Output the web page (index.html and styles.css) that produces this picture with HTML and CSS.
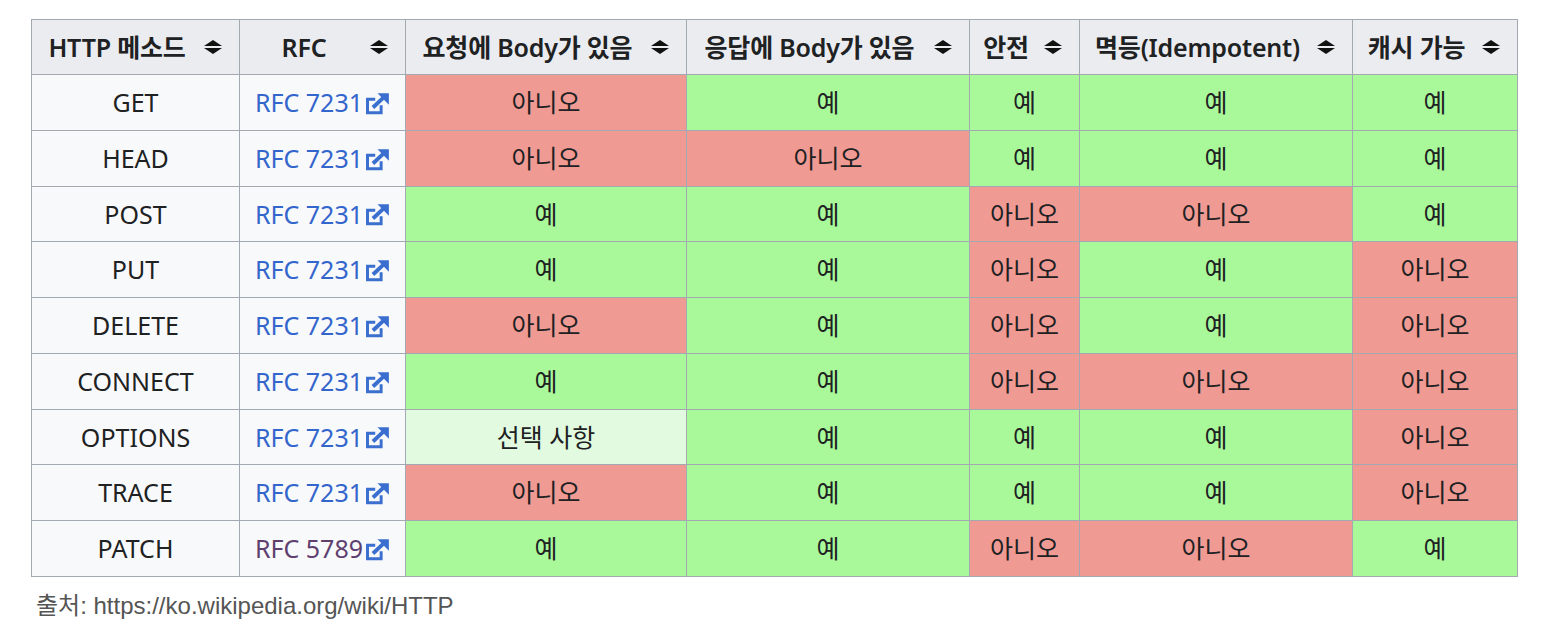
FILE: index.html
```html
<!DOCTYPE html>
<html lang="ko">
<head>
<meta charset="utf-8">
<title>HTTP 메소드</title>
<link rel="stylesheet" href="styles.css">
</head>
<body>
<svg width="0" height="0" class="defs" aria-hidden="true">
  <defs>
    <symbol id="sort" viewBox="0 0 17 13">
      <polygon points="0,5.6 8.5,0 17,5.6" fill="#111"/>
      <polygon points="0,7.4 8.5,13 17,7.4" fill="#111"/>
    </symbol>
    <symbol id="ext" viewBox="0 0 22 20">
      <path d="M9 6.2H2.2V18.2H14.2V11.5" fill="none" stroke="#3a6fd0" stroke-width="2.6"/>
      <path d="M7 13.5L16 5" fill="none" stroke="#3a6fd0" stroke-width="3.4"/>
      <polygon points="11,1 21,1 21,11" fill="#3a6fd0"/>
    </symbol>
  </defs>
</svg>
<table class="wikitable">
  <colgroup>
    <col class="c1"><col class="c2"><col class="c3"><col class="c4"><col class="c5"><col class="c6"><col class="c7">
  </colgroup>
  <thead>
    <tr>
      <th><div class="hd"><span class="lbl">HTTP 메소드</span><svg class="sort"><use href="#sort"/></svg></div></th>
      <th><div class="hd"><span class="lbl">RFC</span><svg class="sort"><use href="#sort"/></svg></div></th>
      <th><div class="hd"><span class="lbl">요청에 Body가 있음</span><svg class="sort"><use href="#sort"/></svg></div></th>
      <th><div class="hd"><span class="lbl">응답에 Body가 있음</span><svg class="sort"><use href="#sort"/></svg></div></th>
      <th><div class="hd"><span class="lbl">안전</span><svg class="sort"><use href="#sort"/></svg></div></th>
      <th><div class="hd"><span class="lbl">멱등(Idempotent)</span><svg class="sort"><use href="#sort"/></svg></div></th>
      <th><div class="hd"><span class="lbl">캐시 가능</span><svg class="sort"><use href="#sort"/></svg></div></th>
    </tr>
  </thead>
  <tbody>
    <tr>
      <td>GET</td>
      <td><a class="ext">RFC 7231<svg class="exticon"><use href="#ext"/></svg></a></td>
      <td class="no">아니오</td><td class="yes">예</td><td class="yes">예</td><td class="yes">예</td><td class="yes">예</td>
    </tr>
    <tr>
      <td>HEAD</td>
      <td><a class="ext">RFC 7231<svg class="exticon"><use href="#ext"/></svg></a></td>
      <td class="no">아니오</td><td class="no">아니오</td><td class="yes">예</td><td class="yes">예</td><td class="yes">예</td>
    </tr>
    <tr>
      <td>POST</td>
      <td><a class="ext">RFC 7231<svg class="exticon"><use href="#ext"/></svg></a></td>
      <td class="yes">예</td><td class="yes">예</td><td class="no">아니오</td><td class="no">아니오</td><td class="yes">예</td>
    </tr>
    <tr>
      <td>PUT</td>
      <td><a class="ext">RFC 7231<svg class="exticon"><use href="#ext"/></svg></a></td>
      <td class="yes">예</td><td class="yes">예</td><td class="no">아니오</td><td class="yes">예</td><td class="no">아니오</td>
    </tr>
    <tr>
      <td>DELETE</td>
      <td><a class="ext">RFC 7231<svg class="exticon"><use href="#ext"/></svg></a></td>
      <td class="no">아니오</td><td class="yes">예</td><td class="no">아니오</td><td class="yes">예</td><td class="no">아니오</td>
    </tr>
    <tr>
      <td>CONNECT</td>
      <td><a class="ext">RFC 7231<svg class="exticon"><use href="#ext"/></svg></a></td>
      <td class="yes">예</td><td class="yes">예</td><td class="no">아니오</td><td class="no">아니오</td><td class="no">아니오</td>
    </tr>
    <tr>
      <td>OPTIONS</td>
      <td><a class="ext">RFC 7231<svg class="exticon"><use href="#ext"/></svg></a></td>
      <td class="opt">선택 사항</td><td class="yes">예</td><td class="yes">예</td><td class="yes">예</td><td class="no">아니오</td>
    </tr>
    <tr>
      <td>TRACE</td>
      <td><a class="ext">RFC 7231<svg class="exticon"><use href="#ext"/></svg></a></td>
      <td class="no">아니오</td><td class="yes">예</td><td class="yes">예</td><td class="yes">예</td><td class="no">아니오</td>
    </tr>
    <tr>
      <td>PATCH</td>
      <td><a class="ext visited">RFC 5789<svg class="exticon"><use href="#ext"/></svg></a></td>
      <td class="yes">예</td><td class="yes">예</td><td class="no">아니오</td><td class="no">아니오</td><td class="yes">예</td>
    </tr>
  </tbody>
</table>
<p class="source">출처: https://ko.wikipedia.org/wiki/HTTP</p>
</body>
</html>
```

FILE: styles.css
```css
html, body {
  margin: 0;
  padding: 0;
  background: #ffffff;
}
body {
  padding: 19px 0 0 31px;
  font-family: "Noto Sans", "Noto Sans CJK KR", sans-serif;
  color: #202122;
}
.defs {
  position: absolute;
  width: 0;
  height: 0;
}
.wikitable {
  border-collapse: collapse;
  table-layout: fixed;
  width: 1486px;
  border: 1px solid #a2a9b1;
  background: #f8f9fa;
  font-size: 25px;
}
.c1 { width: 208px; }
.c2 { width: 166px; }
.c3 { width: 281px; }
.c4 { width: 283px; }
.c5 { width: 110px; }
.c6 { width: 273px; }
.c7 { width: 165px; }
.wikitable th,
.wikitable td {
  border: 1px solid #a2a9b1;
  padding: 0 6px;
  text-align: center;
  line-height: 1.3;
  white-space: nowrap;
}
.wikitable thead tr {
  height: 55px;
}
.wikitable tbody tr {
  height: 55.75px;
}
.wikitable th {
  background: #eaecf0;
  font-weight: 600;
  padding: 0 17px 0 8px;
  letter-spacing: -0.2px;
}
.hd {
  display: flex;
  align-items: center;
  gap: 10px;
}
.lbl {
  flex: 1;
  text-align: center;
}
.sort {
  width: 18px;
  height: 14px;
  flex: none;
}
.no { background: #f09a94; }
.yes { background: #a9f99b; }
.opt { background: #e2fbe0; }
.ext {
  color: #3366cc;
  text-decoration: none;
  display: inline-flex;
  align-items: center;
  gap: 2px;
}
.ext.visited {
  color: #5e3f70;
}
.exticon {
  width: 25px;
  height: 23px;
  margin-top: 2px;
}
.source {
  margin: 9px 0 0 5px;
  font-family: "Liberation Sans", "Noto Sans CJK KR", sans-serif;
  font-size: 24px;
  color: #555555;
}
```
